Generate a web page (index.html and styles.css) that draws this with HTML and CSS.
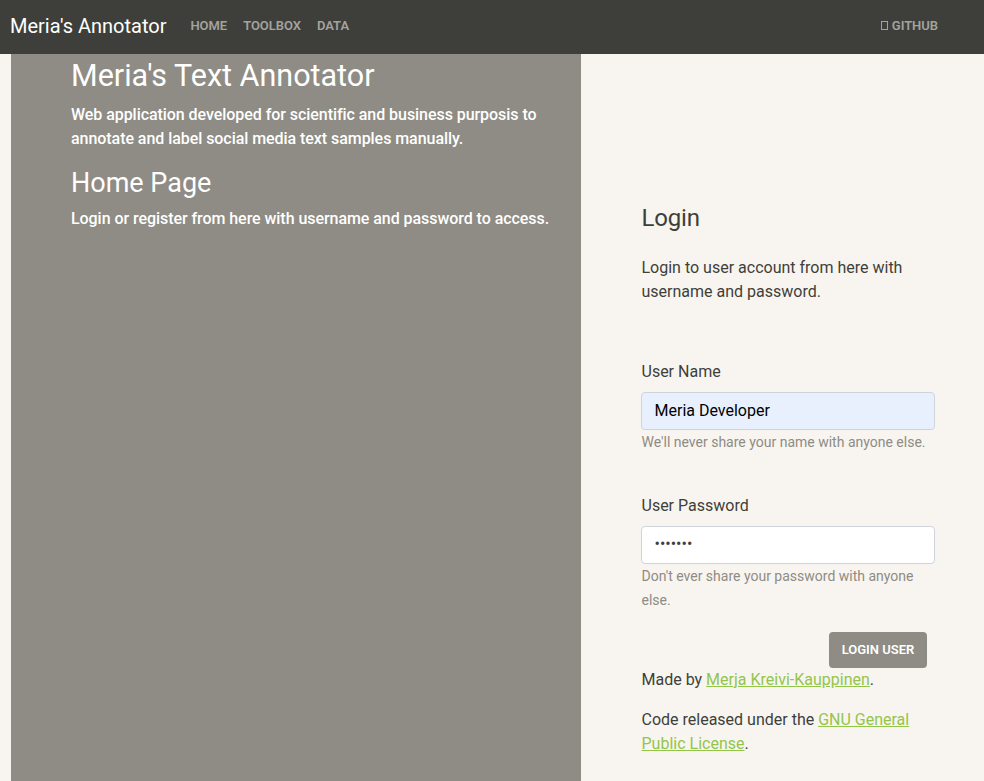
FILE: index.html
```html
<!DOCTYPE html>
<html lang="en">
<head>
<meta charset="utf-8">
<title>Meria's Annotator</title>
<link rel="stylesheet" href="styles.css">
</head>
<body>
<nav class="navbar">
  <a class="brand" href="#">Meria's Annotator</a>
  <ul class="nav-links">
    <li><a href="#">Home</a></li>
    <li><a href="#">Toolbox</a></li>
    <li><a href="#">Data</a></li>
  </ul>
  <a class="github" href="#"><span class="glyph"></span>GitHub</a>
</nav>
<div class="page">
  <section class="intro">
    <h1>Meria's Text Annotator</h1>
    <p>Web application developed for scientific and business purposis to annotate and label social media text samples manually.</p>
    <h2>Home Page</h2>
    <p>Login or register from here with username and password to access.</p>
  </section>
  <main class="login">
    <h3>Login</h3>
    <p class="lead">Login to user account from here with username and password.</p>
    <form>
      <div class="group">
        <label for="name">User Name</label>
        <input class="filled" id="name" type="text" value="Meria Developer">
        <small>We'll never share your name with anyone else.</small>
      </div>
      <div class="group">
        <label for="password">User Password</label>
        <input class="secret" id="password" type="password" value="1234567">
        <small>Don't ever share your password with anyone else.</small>
      </div>
      <button type="button">Login User</button>
    </form>
    <footer>
      <p>Made by <a href="#">Merja Kreivi-Kauppinen</a>.</p>
      <p>Code released under the <a href="#">GNU General Public License</a>.</p>
    </footer>
  </main>
</div>
</body>
</html>
```
FILE: styles.css
```css
* { box-sizing: border-box; }
html { overflow: hidden; }
body {
  margin: 0;
  height: 781px;
  overflow: hidden;
  background: #f8f5f0;
  color: #3e3f3a;
  font: 400 16px/24px Roboto, sans-serif;
}
h1, h2, h3, p, ul { margin: 0; padding: 0; font-weight: 400; }
.navbar {
  display: flex;
  align-items: center;
  height: 54px;
  padding: 0 46px 2px 10px;
  background: #3e3f3a;
}
.navbar a { text-decoration: none; }
.brand { color: #fff; font-size: 20px; line-height: 30px; }
.nav-links { display: flex; gap: 16px; margin-left: 24px; list-style: none; }
.nav-links a, .github {
  color: #a3a39e;
  font-size: 13px;
  line-height: 20px;
  font-weight: 600;
  letter-spacing: -0.04px;
  text-transform: uppercase;
}
.nav-links li { display: flex; }
.github { display: flex; align-items: center; gap: 4px; margin-left: auto; }
.glyph { width: 7px; height: 9px; margin-top: -1px; border: 1px solid #a3a39e; }
.page { display: flex; height: 727px; padding-left: 11px; }
.intro {
  width: 570px;
  padding: 3px 30px 0 60px;
  background: #8e8c84;
  color: #fff;
}
.intro h1 { font-size: 30.5px; line-height: 38px; margin-bottom: 8px; }
.intro h2 { font-size: 27px; line-height: 34px; margin: 15px 0 7px; }
.intro p { font-weight: 500; letter-spacing: -0.055px; }
.login { width: 354px; padding: 150px 0 0 60px; }
.login h3 { font-size: 24px; line-height: 29px; margin-bottom: 23px; letter-spacing: -0.2px; }
.lead { margin-bottom: 56px; }
.group { margin-bottom: 40px; }
.login h3, .lead, label, small, footer { padding-left: 0.5px; }
label { display: block; margin-bottom: 8px; }
input {
  display: block;
  width: 100%;
  height: 38px;
  padding: 5px 12.5px 7px;
  border: 1px solid #ced4da;
  border-radius: 4px;
  background: #fff;
  color: #3e3f3a;
  font: inherit;
}
input.filled { background: #e8f0fe; color: #000; }
input.secret { padding-top: 4px; padding-bottom: 8px; }
small { display: block; font-size: 14px; line-height: 24px; color: #8e8c84; }
.group:nth-child(2) { margin-bottom: 20px; }
button {
  display: block;
  width: 98px;
  height: 36px;
  margin: 0 8px 0 auto;
  padding: 0;
  border: 0;
  border-radius: 4px;
  background: #8e8c84;
  color: #fff;
  font: 600 13px/20px Roboto, sans-serif;
  text-transform: uppercase;
}
footer p { margin-bottom: 16px; }
footer a { color: #93c54b; text-decoration: underline; }
```
